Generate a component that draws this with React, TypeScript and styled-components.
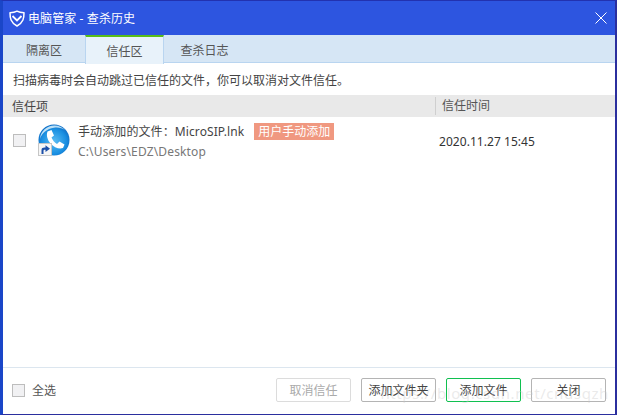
import React from 'react';
import styled, { createGlobalStyle } from 'styled-components';

const GlobalStyle = createGlobalStyle`
  html, body {
    margin: 0;
    padding: 0;
    background: #fff;
  }
  body {
    font-family: "Noto Sans", "Noto Sans CJK SC", sans-serif;
    font-size: 12px;
    color: #444;
  }
`;

const Window = styled.div`
  position: relative;
  width: 617px;
  height: 415px;
  box-sizing: border-box;
  display: flex;
  flex-direction: column;
  background: #fff;
  border-style: solid;
  border-color: #2232b0 #2b2f9e #2b2f9e #1a46c8;
  border-width: 1px 2px 1px 3px;
  overflow: hidden;
`;

const TitleBar = styled.div`
  height: 34px;
  flex: none;
  display: flex;
  align-items: center;
  padding: 0 8px 0 6px;
  background: #2d55e0;
  color: #fff;
  font-size: 12px;
`;

const TitleText = styled.span`
  margin-left: 3px;
  flex: 1;
  letter-spacing: 0.1px;
`;

const TabBar = styled.div`
  height: 28px;
  flex: none;
  box-sizing: border-box;
  display: flex;
  background: #d6e6f5;
  border-bottom: 1px solid #b9d5f0;
`;

const Tab = styled.div<{ $active?: boolean; $width: number }>`
  width: ${({ $width }) => $width}px;
  box-sizing: border-box;
  display: flex;
  align-items: center;
  justify-content: center;
  font-size: 12px;
  color: #555;
  border-right: 1px solid ${({ $active }) => ($active ? '#b9d5f0' : 'transparent')};
  border-left: 1px solid ${({ $active }) => ($active ? '#b9d5f0' : 'transparent')};
  background: ${({ $active }) => ($active ? '#e8f2fa' : 'transparent')};
  border-top: 2px solid ${({ $active }) => ($active ? '#58bd18' : 'transparent')};
  height: ${({ $active }) => ($active ? '29px' : '27px')};
`;

const Notice = styled.div`
  height: 32px;
  flex: none;
  display: flex;
  align-items: center;
  padding: 2px 0 0 10px;
  box-sizing: border-box;
  font-size: 12px;
  color: #444;
`;

const TableHead = styled.div`
  height: 22px;
  flex: none;
  display: flex;
  align-items: center;
  background: #e9e9e9;
  color: #444;
`;

const ItemHeading = styled.div`
  width: 432px;
  padding-left: 9px;
  box-sizing: border-box;
`;

const TimeHeading = styled.div`
  height: 18px;
  line-height: 18px;
  padding-left: 6px;
  border-left: 1px solid #cfcfcf;
  color: #555;
`;

const Row = styled.div`
  flex: 1;
  display: flex;
  align-items: flex-start;
  padding: 5px 0 0 10px;
`;

const Check = styled.div`
  width: 13px;
  height: 13px;
  flex: none;
  box-sizing: border-box;
  border: 1px solid #bdbdbd;
  background: #f1f1f3;
`;

const RowCheck = styled(Check)`
  margin-top: 12px;
`;

const FileIcon = styled.div`
  width: 32px;
  height: 32px;
  flex: none;
  margin: 2px 8px 0 12px;
`;

const FileInfo = styled.div`
  width: 361px;
  flex: none;
`;

const FileTitle = styled.div`
  display: flex;
  align-items: center;
  height: 18px;
  color: #444;
  letter-spacing: 0.1px;
`;

const Badge = styled.span`
  margin-left: 10px;
  height: 17px;
  line-height: 17px;
  padding: 0 4px;
  background: #f09880;
  color: #fff;
  letter-spacing: 0;
`;

const FilePath = styled.div`
  margin-top: 3px;
  color: #777;
  letter-spacing: 0.15px;
`;

const Time = styled.div`
  margin-top: 11px;
  color: #333;
  letter-spacing: 0.05px;
`;

const Footer = styled.div`
  height: 47px;
  flex: none;
  box-sizing: border-box;
  display: flex;
  align-items: flex-start;
  padding: 10px 9px 0 9px;
  border-top: 1px solid #dce6ef;
  background: #fff;
`;

const SelectAll = styled.label`
  flex: 1;
  display: flex;
  align-items: center;
  gap: 7px;
  height: 24px;
  color: #555;
`;

const Buttons = styled.div`
  display: flex;
  gap: 10px;
`;

const Button = styled.button<{ $variant?: 'primary' | 'disabled' }>`
  width: 75px;
  height: 24px;
  padding: 0;
  box-sizing: border-box;
  border-radius: 2px;
  background: #fff;
  font: inherit;
  border: 1px solid
    ${({ $variant }) =>
      $variant === 'primary' ? '#10c050' : $variant === 'disabled' ? '#dcdcdc' : '#b4b4b4'};
  color: ${({ $variant }) => ($variant === 'disabled' ? '#aaa' : '#444')};
`;

const Watermark = styled.div`
  position: absolute;
  right: 6px;
  bottom: 11px;
  font-size: 15px;
  letter-spacing: 0.6px;
  color: rgba(200, 200, 200, 0.38);
  pointer-events: none;
`;

const ShieldLogo = () => (
  <svg width="16" height="17" viewBox="0 0 16 17" fill="none">
    <path d="M8 1.200C10 2.400 12.500 2.800 15 2.800C15 8 14.500 12.500 8 16C1.500 12.500 1 8 1 2.800C3.500 2.800 6 2.400 8 1.200Z" stroke="#fff" strokeWidth="1.500" strokeLinejoin="round" />
    <path d="M3.500 6L8 10.500L12.500 6" stroke="#fff" strokeWidth="1.800" />
  </svg>
);

const CloseIcon = () => (
  <svg width="12" height="12" viewBox="0 0 12 12" stroke="#fff" strokeWidth="1">
    <path d="M0.500 0.500L11.500 11.500M11.500 0.500L0.500 11.500" />
  </svg>
);

const SipIcon = () => (
  <svg width="32" height="32" viewBox="0 0 32 32">
    <defs>
      <radialGradient id="ball" cx="0.5" cy="0.55" r="0.6">
        <stop offset="0" stopColor="#5cbcf2" />
        <stop offset="0.65" stopColor="#1a90e2" />
        <stop offset="1" stopColor="#0b62bc" />
      </radialGradient>
      <linearGradient id="rim" x1="0" y1="0" x2="1" y2="1">
        <stop offset="0" stopColor="#cfeafa" />
        <stop offset="1" stopColor="#8cc8ee" />
      </linearGradient>
    </defs>
    <circle cx="16" cy="16" r="15.500" fill="url(#ball)" />
    <path d="M2 15C2.500 7 9 1.500 16.500 1.500C21 1.500 25 3.500 27.500 6.500C24 4 20 3.200 16 3.800C9 4.800 4 9 2 15Z" fill="url(#rim)" />
    <path d="M9.500 7.500L13.500 6L16 11.500L13.500 13.500C14.500 16 16.500 18.500 19 20L21.500 17.500L26.500 20.500L25 24C21.500 25.500 16 23.500 12.500 19.500C9.500 16 8 11 9.500 7.500Z" fill="#fff" />
    <rect x="0.500" y="19.500" width="13" height="12" fill="#f6f6f6" stroke="#c6c6c6" />
    <path d="M3.500 30V26C3.500 24.200 4.800 23.500 6.500 23.500H7.500V21.200L12 24.700L7.500 28V25.800H6.800C5.800 25.800 5.500 26.300 5.500 27.200V30Z" fill="#1c4fa8" />
  </svg>
);

const App = () => {
  return (
    <>
      <GlobalStyle />
      <Window>
        <TitleBar>
          <ShieldLogo />
          <TitleText>电脑管家 - 查杀历史</TitleText>
          <CloseIcon />
        </TitleBar>
        <TabBar>
          <Tab $width={82}>隔离区</Tab>
          <Tab $width={79} $active>信任区</Tab>
          <Tab $width={81}>查杀日志</Tab>
        </TabBar>
        <Notice>扫描病毒时会自动跳过已信任的文件，你可以取消对文件信任。</Notice>
        <TableHead>
          <ItemHeading>信任项</ItemHeading>
          <TimeHeading>信任时间</TimeHeading>
        </TableHead>
        <Row>
          <RowCheck />
          <FileIcon>
            <SipIcon />
          </FileIcon>
          <FileInfo>
            <FileTitle>
              手动添加的文件：MicroSIP.lnk
              <Badge>用户手动添加</Badge>
            </FileTitle>
            <FilePath>C:\Users\EDZ\Desktop</FilePath>
          </FileInfo>
          <Time>2020.11.27 15:45</Time>
        </Row>
        <Footer>
          <SelectAll>
            <Check />
            全选
          </SelectAll>
          <Buttons>
            <Button $variant="disabled">取消信任</Button>
            <Button>添加文件夹</Button>
            <Button $variant="primary">添加文件</Button>
            <Button>关闭</Button>
          </Buttons>
        </Footer>
        <Watermark>https://blog.csdn.net/cnusqzh</Watermark>
      </Window>
    </>
  );
};

export default App;
